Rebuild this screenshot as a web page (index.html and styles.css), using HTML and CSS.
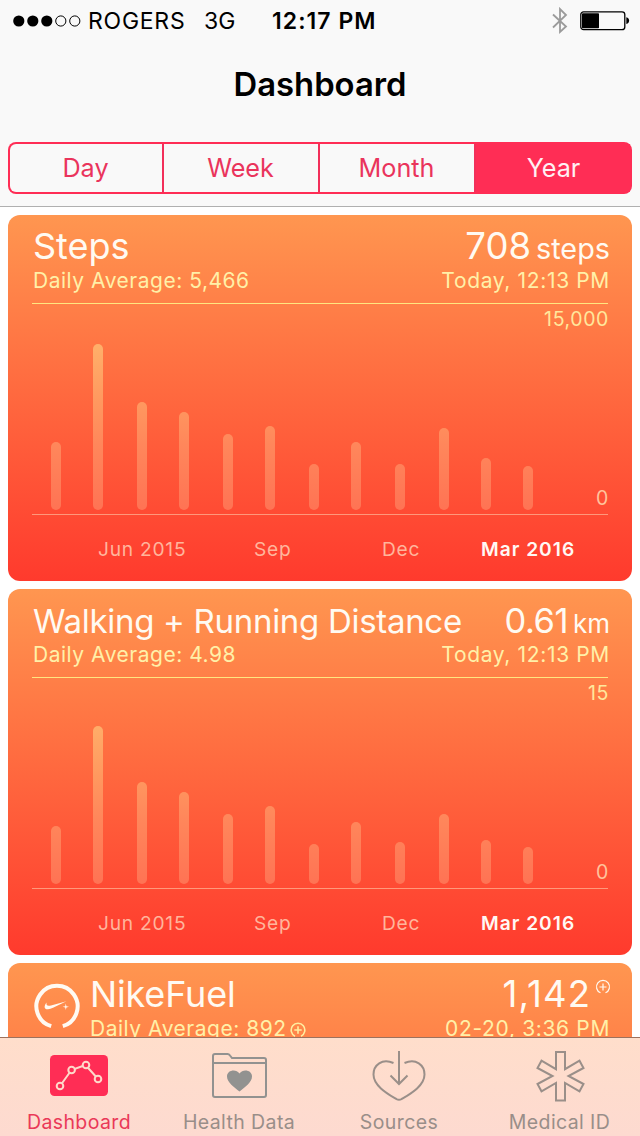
FILE: index.html
```html
<!DOCTYPE html>
<html lang="en">
<head>
<meta charset="utf-8">
<title>Dashboard</title>
<link rel="stylesheet" href="styles.css">
</head>
<body>
<div class="screen">
  <header class="header">
    <div class="status">
      <div class="status-left">
        <svg class="signal" width="68" height="12" viewBox="0 0 68 12">
          <circle cx="5.8" cy="6" r="5.6"/><circle cx="19.8" cy="6" r="5.6"/><circle cx="33.8" cy="6" r="5.6"/>
          <circle class="ring" cx="47.8" cy="6" r="5.1"/><circle class="ring" cx="61.8" cy="6" r="5.1"/>
        </svg>
        <span class="carrier">ROGERS</span>
        <span class="network">3G</span>
      </div>
      <div class="clock">12:17 PM</div>
      <div class="status-right">
        <svg width="16" height="28" viewBox="0 0 16 28" fill="none" stroke="#9b9b9b" stroke-width="1.8"><path d="M1 7.5 14 19.500 8 25V2L14 8 1 20.500"/></svg>
        <svg width="50" height="20" viewBox="0 0 50 20"><rect x=".8" y=".8" width="44" height="17.900" rx="2.800" fill="none" stroke="#000" stroke-width="1.300"/><rect x="2" y="2.200" width="17" height="15" rx=".8"/><path d="M46.300 6.200c2 .6 2.800 1.600 2.800 3.400s-.8 2.900-2.800 3.500z"/></svg>
      </div>
    </div>
    <h1 class="title">Dashboard</h1>
    <nav class="segments">
      <span class="segment">Day</span>
      <span class="segment">Week</span>
      <span class="segment">Month</span>
      <span class="segment active">Year</span>
    </nav>
  </header>

  <main class="cards">
    <section class="card">
      <div class="row row-main"><span class="name">Steps</span><span class="value"><span class="number">708</span><span class="unit">steps</span></span></div>
      <div class="row row-sub"><span class="average">Daily Average: 5,466</span><span class="when">Today, 12:13 PM</span></div>
      <div class="plot">
        <svg class="bars" width="510" height="210" viewBox="0 0 510 210">
          <defs><linearGradient id="bar" gradientUnits="userSpaceOnUse" x1="0" y1="40" x2="0" y2="206"><stop offset="0" stop-color="#ffb06a"/><stop offset=".35" stop-color="#ff985f"/><stop offset=".6" stop-color="#ff875b"/><stop offset="1" stop-color="#ff7354"/></linearGradient></defs>
          <g fill="url(#bar)">
            <rect x="19" y="138" width="10" height="68" rx="5"/><rect x="61" y="40" width="10" height="166" rx="5"/><rect x="105" y="98" width="10" height="108" rx="5"/><rect x="147" y="108" width="10" height="98" rx="5"/><rect x="191" y="130" width="10" height="76" rx="5"/><rect x="233" y="122" width="10" height="84" rx="5"/><rect x="277" y="160" width="10" height="46" rx="5"/><rect x="319" y="138" width="10" height="68" rx="5"/><rect x="363" y="160" width="10" height="46" rx="5"/><rect x="407" y="124" width="10" height="82" rx="5"/><rect x="449" y="154" width="10" height="52" rx="5"/><rect x="491" y="162" width="10" height="44" rx="5"/>
          </g>
        </svg>
        <div class="scale"><span class="max">15,000</span><span class="min">0</span></div>
      </div>
      <div class="axis"><span>Jun 2015</span><span>Sep</span><span>Dec</span><span class="current">Mar 2016</span></div>
    </section>

    <section class="card">
      <div class="row row-main"><span class="name distance">Walking + Running Distance</span><span class="value"><span class="number decimal">0.61</span><span class="unit unit-km">km</span></span></div>
      <div class="row row-sub"><span class="average">Daily Average: 4.98</span><span class="when">Today, 12:13 PM</span></div>
      <div class="plot">
        <svg class="bars" width="510" height="210" viewBox="0 0 510 210">
          <g fill="url(#bar)">
            <rect x="19" y="148" width="10" height="58" rx="5"/><rect x="61" y="48" width="10" height="158" rx="5"/><rect x="105" y="104" width="10" height="102" rx="5"/><rect x="147" y="114" width="10" height="92" rx="5"/><rect x="191" y="136" width="10" height="70" rx="5"/><rect x="233" y="128" width="10" height="78" rx="5"/><rect x="277" y="166" width="10" height="40" rx="5"/><rect x="319" y="144" width="10" height="62" rx="5"/><rect x="363" y="164" width="10" height="42" rx="5"/><rect x="407" y="136" width="10" height="70" rx="5"/><rect x="449" y="162" width="10" height="44" rx="5"/><rect x="491" y="169" width="10" height="37" rx="5"/>
          </g>
        </svg>
        <div class="scale"><span class="max">15</span><span class="min">0</span></div>
      </div>
      <div class="axis"><span>Jun 2015</span><span>Sep</span><span>Dec</span><span class="current">Mar 2016</span></div>
    </section>

    <section class="card card-fuel">
      <svg class="fuel-logo" width="46" height="46" viewBox="0 0 46 46">
        <path d="M17.200 43.200A20.600 20.600 0 1 1 28.800 43.200" fill="none" stroke="#fffaf2" stroke-width="4"/>
        <path d="M12.600 19.500C9.600 23 10 26.600 14 26.300c1.600-.2 3.200-.8 5-1.600L32.500 18.300 17 22.400c-3.600.9-5 0-4.400-2.900z" fill="#fffaf2"/>
        <path d="M31.200 23.200l.6-2.700.6 2.700 2.600.6-2.600.6-.6 2.700-.6-2.700-2.600-.6z" fill="#fffaf2"/>
      </svg>
      <div class="fuel-text">
        <div class="row row-main"><span class="name fuel">NikeFuel</span><span class="value"><span class="number thousands">1,142</span><svg class="plus-top" width="16" height="16" viewBox="0 0 16 16" fill="none" stroke="#fffaf2" stroke-width="1.200"><path d="M5.500 13.800A6.500 6.500 0 1 1 10.500 13.800M8 4.500v7M4.500 8h7"/></svg></span></div>
        <div class="row row-sub"><span class="average">Daily Average: 892<svg class="plus-inline" width="16" height="16" viewBox="0 0 16 16" fill="none" stroke="#ffeda0" stroke-width="1.600"><path d="M5 14.200A6.800 6.800 0 1 1 11 14.200M8 4.300v7.400M4.300 8h7.400"/></svg></span><span class="when">02-20, 3:36 PM</span></div>
      </div>
    </section>
  </main>

  <nav class="tabs">
    <div class="tab selected">
      <svg width="60" height="54" viewBox="0 0 60 54"><rect x="1" y="7" width="58" height="41" rx="4.500" fill="#ff2d55"/><g fill="#ff2d55" stroke="#fedaca" stroke-width="2"><path fill="none" d="M11 38 22.500 22 36.500 17 49 31"/><circle cx="11" cy="38" r="3.300"/><circle cx="22.600" cy="22" r="3.300"/><circle cx="37" cy="17" r="3.300"/><circle cx="49" cy="31" r="3.300"/></g></svg>
      <span class="tab-label">Dashboard</span>
    </div>
    <div class="tab">
      <svg width="60" height="54" viewBox="0 0 60 54" fill="none" stroke="#929290" stroke-width="2"><path d="M4 15V8Q4 6 6 6H18.500Q20 6 21 7.500L23 10H55Q57 10 57 12V47Q57 49 55 49H6Q4 49 4 47V15H57"/><path d="M30.500 43.500C25.500 39.500 18 34.500 18 28.500C18 22 27 20.500 30.500 25.500C34 20.500 43 22 43 28.500C43 34.500 35.500 39.500 30.500 43.500Z" fill="#929290" stroke="none"/></svg>
      <span class="tab-label">Health Data</span>
    </div>
    <div class="tab">
      <svg width="60" height="54" viewBox="0 0 60 54" fill="none" stroke="#9a8f89" stroke-width="2"><path d="M30 3V36M21.500 27.500 30 36 38.500 27.500M24.500 15C13 10 4.500 17 4.500 26.500C4.500 38 19 46 27.500 51.200Q30 52.500 32.500 51.200C41 46 55.500 38 55.500 26.500C55.500 17 47 10 35.500 15"/></svg>
      <span class="tab-label">Sources</span>
    </div>
    <div class="tab medical">
      <svg width="60" height="54" viewBox="0 0 60 54" fill="none" stroke="#9a8f89" stroke-width="2"><path d="M26 4H35V21.200L49.500 12.700 53.500 20 38.500 28 53.500 36 49.500 43.300 35 35V52.500H26V35L11.500 43.300 7.500 36 22.500 28 7.500 20 11.500 12.700 26 21.200Z"/></svg>
      <span class="tab-label">Medical ID</span>
    </div>
  </nav>
</div>
</body>
</html>
```
FILE: styles.css
```css
* { box-sizing: border-box; }
body { margin: 0; background: #fff; font-family: Inter, "Liberation Sans", sans-serif; }
svg { display: block; flex: none; }
span { white-space: nowrap; }
.screen { width: 640px; height: 1136px; display: grid; grid-template-rows: 207px 830px 99px; overflow: hidden; }

.header { background: #f9f9f9; border-bottom: 1px solid #b0b0b0; }
.status { height: 40px; padding-top: 1px; display: grid; grid-template-columns: 272px 104px 1fr; align-items: center; font-size: 23px; }
.status-left { display: flex; align-items: center; padding-left: 13px; }
.ring { fill: none; stroke: #000; stroke-width: 1; }
.carrier { width: 97px; margin-left: 7px; letter-spacing: .75px; }
.network { margin-left: 19px; }
.clock { font-weight: 600; white-space: nowrap; letter-spacing: 1.05px; }
.status-right { display: flex; align-items: center; justify-content: flex-end; gap: 12px; padding-right: 10px; }
.title { margin: 0; height: 88px; line-height: 88px; text-align: center; font-size: 32.800px; font-weight: 600; }
.segments { margin: 14px 8px 0; height: 52px; display: grid; grid-template-columns: 152px 156px 156px 1fr; border-radius: 8px; overflow: hidden; padding: 2px; background: linear-gradient(#ff2d55, #ff2d55); gap: 0; grid-template-columns: 154px 156px 156px 1fr; }
.segment { display: flex; align-items: center; justify-content: center; padding: 0 1px 0 0; line-height: 48px; border-right: 2px solid #f2305a; background: #f9f9f9; color: #ea345c; font-size: 25.200px; }
.segment:first-child { border-radius: 6px 0 0 6px; }
.segment.active { padding: 0 0 0 1px; background: #ff2d55; color: #fff0f3; border: 0; }

.cards { padding: 8px 8px 0; display: flex; flex-direction: column; gap: 8px; overflow: hidden; }
.card { flex: none; height: 366px; padding: 10px 24px 0; border-radius: 12px; background: linear-gradient(#ff9650, #ff3a2d); color: #fffaf2; }
.row { display: flex; justify-content: space-between; margin-right: -2px; padding-left: 1px; }
.row-main { height: 42px; line-height: 42px; font-size: 36px; }
.row-sub { height: 26px; line-height: 28px; font-size: 21px; color: #fff0a8; letter-spacing: .52px; }
.when { letter-spacing: .65px; }
.value { display: flex; }
.number { font-size: 36.500px; }
.unit { font-size: 28.800px; line-height: 47px; margin-left: 5px; }
.distance { font-size: 33px; line-height: 45px; letter-spacing: -.3px; }
.decimal { font-size: 34.500px; line-height: 44px; letter-spacing: -.5px; }
.unit-km { font-size: 26px; line-height: 50px; }
.thousands { letter-spacing: 1.100px; }
.plot { margin-top: 10px; height: 212px; display: flex; justify-content: space-between; border-top: 1px solid #ffe680; border-bottom: 1px solid #ff987b; }
.scale { display: flex; flex-direction: column; justify-content: space-between; margin-right: -1px; text-align: right; font-size: 19.500px; letter-spacing: .6px; }
.max { color: #ffe79c; line-height: 31px; }
.min { color: #ffc39c; line-height: 32px; }
.axis { height: 66px; display: grid; grid-template-columns: 66px 89px 67px 40px 88px 40px 59px 96px; line-height: 69px; font-size: 19.200px; letter-spacing: .75px; color: #ffb59c; }
.axis span:nth-child(1) { grid-column: 2; }
.axis span:nth-child(2) { grid-column: 4; }
.axis span:nth-child(3) { grid-column: 6; }
.axis .current { grid-column: 8; font-weight: 600; letter-spacing: 1px; color: #fff8f4; }
.card-fuel { display: flex; gap: 9px; }
.fuel-logo { margin: 10px 0 0 2px; }
.fuel-text { flex: 1; }
.fuel { letter-spacing: -.15px; }
.plus-top { margin: 6px -1px 0 4px; }
.plus-inline { display: inline-block; margin-left: 3px; vertical-align: -2px; }

.tabs { display: grid; grid-template-columns: repeat(4, 160px); border-top: 1px solid #9c715d; background: linear-gradient(#ffdecb, #fddad0); }
.tab { display: flex; flex-direction: column; align-items: center; padding: 10px 2px 0 0; color: #998e89; }
.medical { padding-right: 1px; }
.selected { color: #ea3858; }
.tab-label { font-size: 19.500px; line-height: 26px; margin-top: 7px; letter-spacing: .4px; }
```
